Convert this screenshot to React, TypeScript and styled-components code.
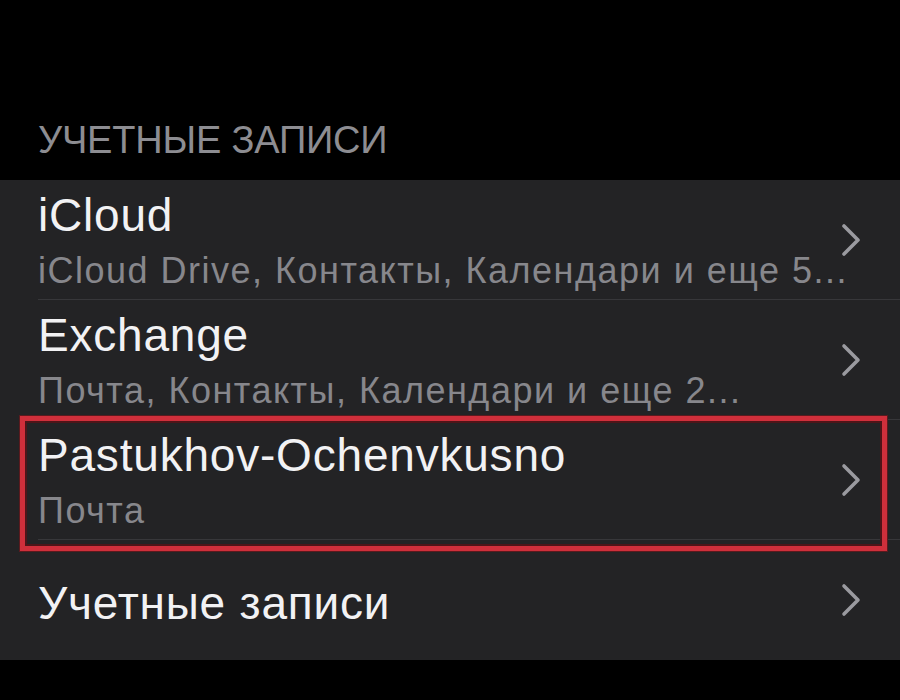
import React from "react";
import styled, { createGlobalStyle } from "styled-components";

const GlobalStyle = createGlobalStyle`
  html, body {
    margin: 0;
    padding: 0;
    background: #000;
  }
  body {
    font-family: "Liberation Sans", Arial, sans-serif;
    -webkit-font-smoothing: antialiased;
  }
`;

const Screen = styled.div`
  width: 900px;
  height: 700px;
  background: #000;
  overflow: hidden;
  display: flex;
  flex-direction: column;
`;

const SectionHeader = styled.div`
  height: 180px;
  box-sizing: border-box;
  display: flex;
  align-items: flex-end;
  padding: 0 38px 18px;
  color: #8d8d92;
  font-size: 38px;
  line-height: 44px;
  letter-spacing: -0.2px;
  text-transform: uppercase;
`;

const List = styled.div`
  background: #232325;
  display: flex;
  flex-direction: column;
`;

const Row = styled.div`
  position: relative;
  height: 120px;
  padding-left: 38px;
  display: flex;
`;

const RowBody = styled.div<{ $last?: boolean }>`
  flex: 1;
  min-width: 0;
  display: flex;
  align-items: center;
  padding-right: 38px;
  border-bottom: ${(p) => (p.$last ? "none" : "1.5px solid #37373a")};
  box-sizing: border-box;
`;

const Texts = styled.div<{ $single?: boolean }>`
  flex: 1;
  min-width: 0;
  display: flex;
  flex-direction: column;
  gap: 10px;
  padding-top: ${(p) => (p.$single ? "6px" : "0")};
`;

const Title = styled.div`
  color: #f2f2f4;
  font-size: 46px;
  line-height: 52px;
  letter-spacing: 0.8px;
  white-space: nowrap;
`;

const Subtitle = styled.div`
  color: #87878c;
  font-size: 36px;
  line-height: 40px;
  letter-spacing: 1.5px;
  white-space: nowrap;
`;

const Chevron = styled.svg`
  flex: none;
  width: 22px;
  height: 36px;
  margin-left: 12px;
`;

const Highlight = styled.div`
  position: absolute;
  left: 20px;
  right: 13px;
  top: -4px;
  bottom: -11px;
  border: 5px solid #cf2f3b;
  box-shadow: inset 0 0 0 2px #4d1519, 0 0 0 1px #5a1a1e;
  pointer-events: none;
`;

const ChevronIcon = () => (
  <Chevron viewBox="0 0 22 36">
    <path
      d="M4 4 L18 18 L4 32"
      fill="none"
      stroke="#9a9a9f"
      strokeWidth="3.6"
      strokeLinecap="round"
      strokeLinejoin="round"
    />
  </Chevron>
);

type Account = {
  title: string;
  subtitle?: string;
  marked?: boolean;
};

const accounts: Account[] = [
  { title: "iCloud", subtitle: "iCloud Drive, Контакты, Календари и еще 5..." },
  { title: "Exchange", subtitle: "Почта, Контакты, Календари и еще 2..." },
  { title: "Pastukhov-Ochenvkusno", subtitle: "Почта", marked: true },
  { title: "Учетные записи" },
];

export default function App() {
  return (
    <>
      <GlobalStyle />
      <Screen>
        <SectionHeader>Учетные записи</SectionHeader>
        <List>
          {accounts.map((a, i) => (
            <Row key={a.title}>
              <RowBody $last={i === accounts.length - 1}>
                <Texts $single={!a.subtitle}>
                  <Title>{a.title}</Title>
                  {a.subtitle && <Subtitle>{a.subtitle}</Subtitle>}
                </Texts>
                <ChevronIcon />
              </RowBody>
              {a.marked && <Highlight />}
            </Row>
          ))}
        </List>
      </Screen>
    </>
  );
}
